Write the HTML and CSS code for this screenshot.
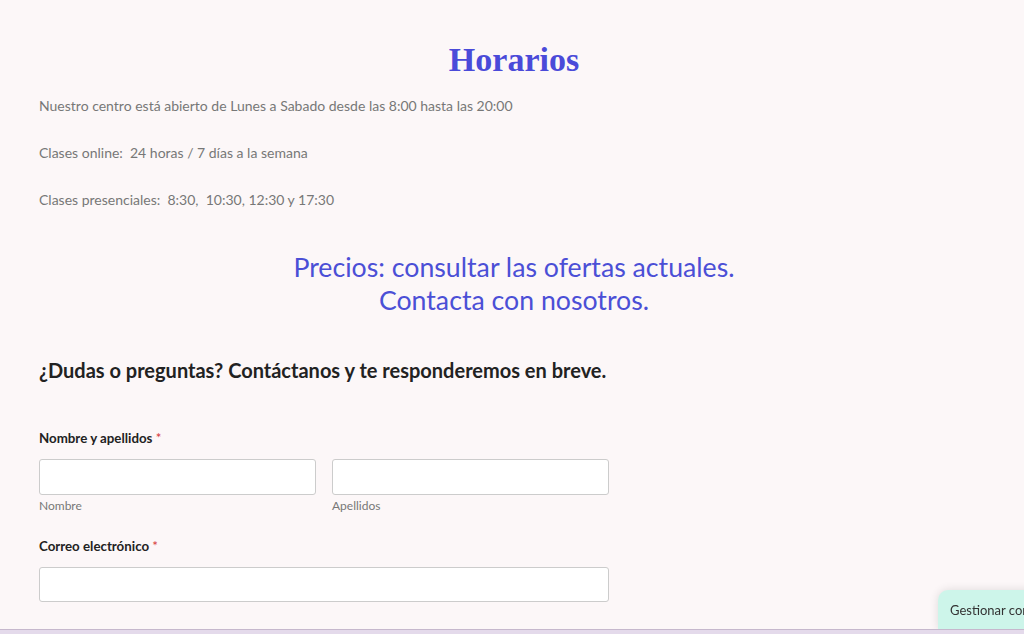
FILE: index.html
```html
<!DOCTYPE html>
<html lang="es">
<head>
<meta charset="utf-8">
<title>Horarios</title>
<link rel="stylesheet" href="styles.css">
</head>
<body>
<main class="page">
  <h1 class="title">Horarios</h1>
  <p class="info">Nuestro centro está abierto de Lunes a Sabado desde las 8:00 hasta las 20:00</p>
  <p class="info">Clases online:&nbsp; 24 horas / 7 días a la semana</p>
  <p class="info">Clases presenciales:&nbsp; 8:30,&nbsp; 10:30, 12:30 y 17:30</p>
  <p class="prices">Precios: consultar las ofertas actuales.<br>Contacta con nosotros.</p>
  <h2 class="contact-heading">¿Dudas o preguntas? Contáctanos y te responderemos en breve.</h2>

  <form class="form">
    <div class="field">
      <label class="label">Nombre y apellidos <span class="req">*</span></label>
      <div class="name-row">
        <div class="sub">
          <input class="input" type="text">
          <span class="sublabel">Nombre</span>
        </div>
        <div class="sub">
          <input class="input" type="text">
          <span class="sublabel">Apellidos</span>
        </div>
      </div>
    </div>
    <div class="field">
      <label class="label">Correo electrónico <span class="req">*</span></label>
      <input class="input input-wide" type="email">
    </div>
    <div class="field">
      <label class="label">Comentario o mensaje <span class="req">*</span></label>
    </div>
  </form>
</main>

<div class="cookie-tab">Gestionar consentimiento</div>
<div class="bottom-bar"></div>
</body>
</html>
```

FILE: styles.css
```css
html, body {
  margin: 0;
  padding: 0;
}

body {
  background: #fcf7f8;
  font-family: Lato, "Open Sans", Arial, sans-serif;
  color: #777;
  overflow: hidden;
  height: 634px;
}

.page {
  width: 950px;
  margin-left: 39px;
  padding-top: 40px;
  display: flex;
  flex-direction: column;
}

.title {
  margin: 0;
  text-align: center;
  font-family: "Liberation Serif", "Times New Roman", serif;
  font-weight: 700;
  font-size: 34px;
  line-height: 40px;
  color: #4a4ad9;
}

.info {
  margin: 14px 0 17px;
  font-size: 14px;
  line-height: 24px;
  color: #777;
}

.info + .info {
  margin-top: 6px;
}

.prices {
  margin: 22px 0 0;
  text-align: center;
  font-size: 26.7px;
  line-height: 33px;
  color: #4b4fd6;
}

.contact-heading {
  margin: 38px 0 0;
  font-size: 20px;
  line-height: 30px;
  font-weight: 700;
  color: #222;
}

.form {
  width: 570px;
  margin-top: 44px;
  display: flex;
  flex-direction: column;
  gap: 23px;
}

.field {
  display: flex;
  flex-direction: column;
}

.label {
  font-size: 13.3px;
  font-weight: 700;
  line-height: 18px;
  color: #222;
  margin-bottom: 12px;
}

.req {
  color: #d63637;
  font-weight: 400;
}

.name-row {
  display: flex;
  gap: 16px;
}

.sub {
  flex: 1;
  display: flex;
  flex-direction: column;
}

.input {
  box-sizing: border-box;
  height: 36px;
  width: 100%;
  margin: 0;
  background: #fff;
  border: 1px solid #ccc;
  border-radius: 3px;
}

.input-wide {
  height: 35px;
}

.sublabel {
  margin-top: 3px;
  font-size: 12px;
  line-height: 16px;
  color: #777;
}

.cookie-tab {
  position: fixed;
  left: 938px;
  bottom: 4px;
  width: 200px;
  height: 40px;
  box-sizing: border-box;
  padding: 11px 12px;
  background: #cdf5ea;
  border-radius: 10px 0 0 0;
  box-shadow: 0 0 10px rgba(0, 0, 0, 0.12);
  font-size: 13px;
  line-height: 18px;
  color: #333;
  white-space: nowrap;
}

.bottom-bar {
  position: fixed;
  left: 0;
  right: 0;
  bottom: 0;
  height: 4px;
  background: #e4daeb;
  border-top: 1px solid #c6b8cd;
}
```
